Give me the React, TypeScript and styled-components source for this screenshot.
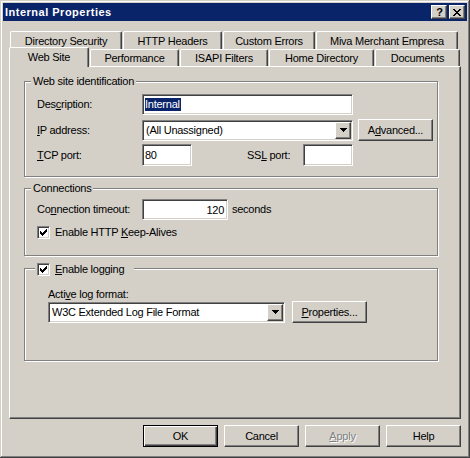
import React from "react";
import styled, { createGlobalStyle } from "styled-components";

const face = "#D4D0C8";
const shadow = "#808080";
const darkShadow = "#404040";
const highlight = "#FFFFFF";
const caption = "#0A246A";

const GlobalStyle = createGlobalStyle`
  html, body {
    margin: 0;
    padding: 0;
    background: ${face};
  }
  body {
    font-family: "Liberation Sans", Arial, sans-serif;
    font-size: 11px;
    letter-spacing: -0.25px;
    color: #000;
  }
  * {
    box-sizing: border-box;
  }
`;

const Window = styled.div`
  width: 470px;
  height: 458px;
  padding: 3px;
  display: flex;
  flex-direction: column;
  background: ${face};
  box-shadow: inset -1px -1px ${darkShadow}, inset 1px 1px ${face},
    inset -2px -2px ${shadow}, inset 2px 2px ${highlight};
`;

const TitleBar = styled.div`
  height: 18px;
  display: flex;
  align-items: center;
  gap: 2px;
  padding: 0 2px;
  background: ${caption};
`;

const Title = styled.div`
  flex: 1;
  color: #fff;
  font-weight: bold;
  letter-spacing: 0.5px;
  line-height: 18px;
`;

const raised = `
  border: 1px solid;
  border-color: ${highlight} ${darkShadow} ${darkShadow} ${highlight};
  box-shadow: inset -1px -1px ${shadow};
`;

const sunken = `
  border: 1px solid;
  border-color: ${shadow} ${highlight} ${highlight} ${shadow};
  box-shadow: inset 1px 1px ${darkShadow}, inset -1px -1px ${face};
`;

const CaptionButton = styled.div`
  width: 16px;
  height: 14px;
  display: flex;
  align-items: center;
  justify-content: center;
  background: ${face};
  ${raised}
`;

const HelpGlyph = styled.span`
  font-weight: bold;
  font-size: 11px;
  line-height: 12px;
  letter-spacing: 0;
  margin-left: 1px;
`;

const Glyph = styled.svg`
  display: block;
  shape-rendering: crispEdges;
`;

const CloseGlyph = () => (
  <Glyph width="8" height="7" viewBox="0 0 8 7">
    <path
      fill="#000"
      d="M0 0h2v1h-2z M6 0h2v1h-2z M1 1h2v1h-2z M5 1h2v1h-2z M2 2h4v1h-4z M3 3h2v1h-2z M2 4h4v1h-4z M1 5h2v1h-2z M5 5h2v1h-2z M0 6h2v1h-2z M6 6h2v1h-2z"
    />
  </Glyph>
);

const CheckGlyph = () => (
  <Glyph width="7" height="7" viewBox="0 0 7 7">
    <path
      fill="#000"
      d="M6 0h1v1h-1z M5 1h2v1h-2z M0 2h1v1h-1z M4 2h3v1h-3z M0 3h2v1h-2z M3 3h3v1h-3z M0 4h5v1h-5z M1 5h3v1h-3z M2 6h1v1h-1z"
    />
  </Glyph>
);

const ArrowGlyph = () => (
  <Glyph width="7" height="4" viewBox="0 0 7 4">
    <path fill="#000" d="M0 0h7v1h-7z M1 1h5v1h-5z M2 2h3v1h-3z M3 3h1v1h-1z" />
  </Glyph>
);

const Body = styled.div`
  flex: 1;
  display: flex;
  flex-direction: column;
  padding: 10px 6px 0 6px;
`;

const TabRow = styled.div<{ $h: number; $inset?: number }>`
  height: ${(p) => p.$h}px;
  display: flex;
  align-items: flex-end;
  gap: 1px;
  padding-left: ${(p) => p.$inset ?? 0}px;
`;

const Tab = styled.div<{ $w: number; $selected?: boolean }>`
  width: ${(p) => p.$w}px;
  height: ${(p) => (p.$selected ? "calc(100% + 3px)" : "100%")};
  margin-bottom: ${(p) => (p.$selected ? "-1px" : "0")};
  position: ${(p) => (p.$selected ? "relative" : "static")};
  z-index: ${(p) => (p.$selected ? 1 : "auto")};
  flex: none;
  display: flex;
  align-items: center;
  justify-content: center;
  padding-bottom: ${(p) => (p.$selected ? "1px" : "0")};
  background: ${face};
  border-top: 1px solid ${highlight};
  border-left: 1px solid ${highlight};
  border-right: 1px solid ${darkShadow};
  border-radius: 2px 2px 0 0;
  box-shadow: inset -1px 0 ${shadow};
  white-space: nowrap;
`;

const Panel = styled.div`
  height: 353px;
  display: flex;
  flex-direction: column;
  gap: 11px;
  padding: 14px 22px 0 14px;
  background: ${face};
  border: 1px solid;
  border-color: ${highlight} ${darkShadow} ${darkShadow} ${highlight};
  box-shadow: inset -1px -1px ${shadow};
`;

const Group = styled.div<{ $mt?: number }>`
  display: flex;
  flex-direction: column;
  align-items: flex-start;
  margin-top: ${(p) => p.$mt ?? 0}px;
  border: 1px solid ${shadow};
  box-shadow: inset 1px 1px ${highlight}, 1px 1px ${highlight};
`;

const Caption = styled.div<{ $ml?: number; $lift?: number; $pr?: number }>`
  height: 13px;
  display: flex;
  align-items: center;
  gap: 5px;
  margin-top: -${(p) => p.$lift ?? 7}px;
  margin-left: ${(p) => p.$ml ?? 6}px;
  padding: 0 ${(p) => p.$pr ?? 2}px 0 2px;
  line-height: 13px;
  background: ${face};
  white-space: nowrap;
`;

const Inner = styled.div<{ $pad: string }>`
  align-self: stretch;
  display: flex;
  flex-direction: column;
  padding: ${(p) => p.$pad};
`;

const Row = styled.div<{ $h: number; $mt?: number }>`
  height: ${(p) => p.$h}px;
  margin-top: ${(p) => p.$mt ?? 0}px;
  display: flex;
  align-items: center;
`;

const Label = styled.div<{ $w?: number; $ml?: number }>`
  width: ${(p) => (p.$w ? `${p.$w}px` : "auto")};
  margin-left: ${(p) => p.$ml ?? 0}px;
  flex: none;
  line-height: 13px;
  white-space: nowrap;
`;

const Key = styled.u`
  text-decoration-thickness: 1px;
  text-underline-offset: 1px;
`;

const Field = styled.div<{ $w: number; $h?: number; $right?: boolean }>`
  width: ${(p) => p.$w}px;
  height: ${(p) => p.$h ?? 21}px;
  flex: none;
  display: flex;
  align-items: center;
  justify-content: ${(p) => (p.$right ? "flex-end" : "flex-start")};
  padding: 0 ${(p) => (p.$right ? 3 : 1)}px 0 2px;
  background: #fff;
  ${sunken}
  white-space: nowrap;
`;

const Selection = styled.span`
  padding: 0 1px 0 0;
  line-height: 13px;
  color: #fff;
  background: ${caption};
`;

const Combo = styled.div<{ $w: number }>`
  width: ${(p) => p.$w}px;
  height: 21px;
  flex: none;
  display: flex;
  align-items: stretch;
  padding: 1px;
  background: #fff;
  ${sunken}
`;

const ComboText = styled.div`
  flex: 1;
  display: flex;
  align-items: center;
  padding-left: 2px;
  white-space: nowrap;
`;

const DropButton = styled.div`
  width: 16px;
  flex: none;
  display: flex;
  align-items: center;
  justify-content: center;
  background: ${face};
  ${raised}
`;

const Button = styled.button<{ $ml?: number; $default?: boolean; $disabled?: boolean }>`
  width: 75px;
  height: 22px;
  flex: none;
  margin: 0 0 0 ${(p) => p.$ml ?? 0}px;
  padding: 0;
  display: flex;
  align-items: center;
  justify-content: center;
  font: inherit;
  letter-spacing: inherit;
  color: ${(p) => (p.$disabled ? shadow : "#000")};
  text-shadow: ${(p) => (p.$disabled ? `1px 1px ${highlight}` : "none")};
  background: ${face};
  border: 1px solid;
  border-color: ${(p) =>
    p.$default ? "#000" : `${highlight} ${darkShadow} ${darkShadow} ${highlight}`};
  box-shadow: ${(p) =>
    p.$default
      ? `inset 1px 1px ${highlight}, inset -1px -1px ${darkShadow}, inset -2px -2px ${shadow}`
      : `inset -1px -1px ${shadow}`};
`;

const CheckBox = styled.div`
  width: 13px;
  height: 13px;
  flex: none;
  display: flex;
  align-items: center;
  justify-content: center;
  background: #fff;
  ${sunken}
`;

const CheckRow = styled.div<{ $mt?: number }>`
  height: 13px;
  margin-top: ${(p) => p.$mt ?? 0}px;
  display: flex;
  align-items: center;
  gap: 5px;
  line-height: 13px;
`;

const ButtonRow = styled.div`
  display: flex;
  justify-content: flex-end;
  gap: 6px;
  margin-top: 6px;
`;

const backTabs = [
  { label: "Directory Security", w: 112 },
  { label: "HTTP Headers", w: 99 },
  { label: "Custom Errors", w: 92 },
  { label: "Miva Merchant Empresa", w: 142 },
];

const frontTabs = [
  { label: "Web Site", w: 80, selected: true },
  { label: "Performance", w: 89 },
  { label: "ISAPI Filters", w: 88 },
  { label: "Home Directory", w: 105 },
  { label: "Documents", w: 85 },
];

export default function App() {
  return (
    <>
      <GlobalStyle />
      <Window>
        <TitleBar>
          <Title>Internal Properties</Title>
          <CaptionButton>
            <HelpGlyph>?</HelpGlyph>
          </CaptionButton>
          <CaptionButton>
            <CloseGlyph />
          </CaptionButton>
        </TitleBar>
        <Body>
          <TabRow $h={18} $inset={1}>
            {backTabs.map((t) => (
              <Tab key={t.label} $w={t.w}>
                {t.label}
              </Tab>
            ))}
          </TabRow>
          <TabRow $h={17}>
            {frontTabs.map((t) => (
              <Tab key={t.label} $w={t.w} $selected={t.selected}>
                {t.label}
              </Tab>
            ))}
          </TabRow>
          <Panel>
            <Group>
              <Caption>Web site identification</Caption>
              <Inner $pad="6px 0 10px 12px">
                <Row $h={21}>
                  <Label $w={105}>
                    Des<Key>c</Key>ription:
                  </Label>
                  <Field $w={211}>
                    <Selection>Internal</Selection>
                  </Field>
                </Row>
                <Row $h={22} $mt={4}>
                  <Label $w={105}>
                    <Key>I</Key>P address:
                  </Label>
                  <Combo $w={211}>
                    <ComboText>(All Unassigned)</ComboText>
                    <DropButton>
                      <ArrowGlyph />
                    </DropButton>
                  </Combo>
                  <Button $ml={5}>
                    A<Key>d</Key>vanced...
                  </Button>
                </Row>
                <Row $h={22} $mt={3}>
                  <Label $w={105}>
                    <Key>T</Key>CP port:
                  </Label>
                  <Field $w={50} $h={22}>
                    80
                  </Field>
                  <Label $w={56} $ml={55}>
                    SS<Key>L</Key> port:
                  </Label>
                  <Field $w={50} $h={22} />
                </Row>
              </Inner>
            </Group>

            <Group>
              <Caption>Connections</Caption>
              <Inner $pad="4px 0 16px 12px">
                <Row $h={21}>
                  <Label $w={105}>
                    Co<Key>n</Key>nection timeout:
                  </Label>
                  <Field $w={86} $right>
                    120
                  </Field>
                  <Label $ml={4}>seconds</Label>
                </Row>
                <CheckRow $mt={6}>
                  <CheckBox>
                    <CheckGlyph />
                  </CheckBox>
                  <span>
                    Enable HTTP <Key>K</Key>eep-Alives
                  </span>
                </CheckRow>
              </Inner>
            </Group>

            <Group $mt={1}>
              <Caption $ml={10} $lift={6} $pr={10}>
                <CheckBox>
                  <CheckGlyph />
                </CheckBox>
                <span>
                  <Key>E</Key>nable logging
                </span>
              </Caption>
              <Inner $pad="12px 0 37px 23px">
                <Label>
                  Acti<Key>v</Key>e log format:
                </Label>
                <Row $h={22}>
                  <Combo $w={237}>
                    <ComboText>W3C Extended Log File Format</ComboText>
                    <DropButton>
                      <ArrowGlyph />
                    </DropButton>
                  </Combo>
                  <Button $ml={7}>
                    <Key>P</Key>roperties...
                  </Button>
                </Row>
              </Inner>
            </Group>
          </Panel>
          <ButtonRow>
            <Button $default>OK</Button>
            <Button>Cancel</Button>
            <Button $disabled>
              <Key>A</Key>pply
            </Button>
            <Button>Help</Button>
          </ButtonRow>
        </Body>
      </Window>
    </>
  );
}
